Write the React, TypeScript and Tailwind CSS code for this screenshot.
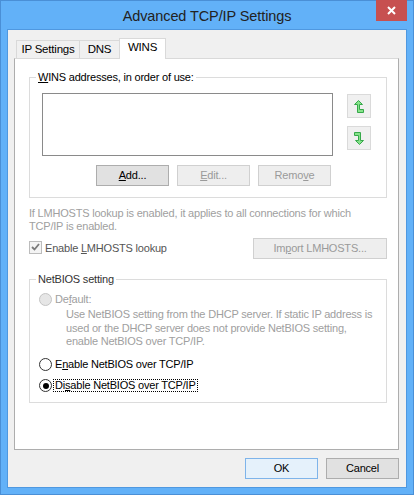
import React from "react";

const font = { fontFamily: '"Liberation Sans", Arial, sans-serif' };

function UpIcon({ flip = false }: { flip?: boolean }) {
  return (
    <svg width="10" height="13" viewBox="0 0 10 13" style={flip ? { transform: "rotate(180deg)" } : undefined}>
      <polygon
        points="4.5,0.5 8.5,4.5 5.5,4.5 5.5,9.5 9.5,9.5 9.5,12.5 3.5,12.5 3.5,4.5 0.5,4.5"
        fill="#86e38a"
        stroke="#36a84a"
        strokeWidth="1"
        strokeLinejoin="miter"
      />
    </svg>
  );
}

function Btn({
  children,
  disabled = false,
  width = "w-[73px]",
  primary = false,
}: {
  children: React.ReactNode;
  disabled?: boolean;
  width?: string;
  primary?: boolean;
}) {
  const cls = disabled
    ? "border-[#d0d0d0] bg-[#eeeeee] text-[#9a9a9a]"
    : primary
    ? "border-[#7eb4ea] bg-[#e5f1fb] text-black"
    : "border-[#adadad] bg-[#e1e1e1] text-black";
  return (
    <div className={`${width} h-[21px] border ${cls} flex items-center justify-center text-[11px] leading-[13px] tracking-[-0.2px]`}>
      {children}
    </div>
  );
}

function Radio({ checked = false, disabled = false }: { checked?: boolean; disabled?: boolean }) {
  return (
    <div
      className={`w-[13px] h-[13px] rounded-full border flex items-center justify-center ${
        disabled ? "border-[#c4c4c4] bg-[#e6e6e6]" : "border-[#333333] bg-white"
      }`}
    >
      {checked && <div className="w-[6px] h-[6px] rounded-full bg-black" />}
    </div>
  );
}

export default function App() {
  return (
    <div className="w-[414px] h-[495px] border border-[#4a8fd6] bg-[#62b1f8] flex flex-col" style={font}>
      {/* Title bar */}
      <div className="relative h-[28px] flex items-center justify-center">
        <span className="text-[14.5px] text-[#222222] leading-[18px] mt-[1px] tracking-[-0.1px]">Advanced TCP/IP Settings</span>
        <div className="absolute right-[6px] top-[-1px] w-[31px] h-[21px] bg-[#c75050] flex items-center justify-center">
          <svg width="9" height="9" viewBox="0 0 9 9">
            <path d="M1 1 L8 8 M8 1 L1 8" stroke="white" strokeWidth="2" />
          </svg>
        </div>
      </div>

      {/* Client area */}
      <div className="mx-[6px] mb-[6px] flex-1 border border-[#4f98e0] bg-[#f0f0f0] flex flex-col tracking-[-0.2px]">
        {/* Tabs */}
        <div className="pt-[8px] pl-[8px] flex items-end h-[28px]">
          <div className="w-[64px] h-[18px] border border-b-0 border-[#d9d9d9] bg-[#f0f0f0] flex items-center justify-center text-[11.5px] text-black">
            IP Settings
          </div>
          <div className="w-[40px] h-[18px] border border-l-0 border-b-0 border-[#d9d9d9] bg-[#f0f0f0] flex items-center justify-center text-[11.5px] text-black">
            DNS
          </div>
          <div className="relative z-10 ml-[-1px] mb-[-1px] w-[47px] h-[21px] border border-b-0 border-[#d9d9d9] bg-white flex items-center justify-center pb-[3px] text-[11.5px] text-black">
            WINS
          </div>
        </div>

        {/* Panel */}
        <div className="ml-[6px] mr-[7px] h-[392px] border border-[#adadad] border-t-[#d9d9d9] bg-white flex flex-col pl-[14px] pr-[11px]">
          {/* WINS addresses group */}
          <div className="relative mt-[18px] h-[121px] border border-[#dcdcdc] pl-[12px] pt-[15px]">
            <div className="absolute left-[6px] top-[-7px] px-[2px] bg-white text-[11px] leading-[13px] text-black">
              <u>W</u>INS addresses, in order of use:
            </div>
            <div className="flex items-start">
              <div className="w-[291px] h-[63px] border border-[#8a8a8a] bg-white" />
              <div className="ml-[14px] mt-[1px] flex flex-col gap-[8px]">
                <div className="w-[24px] h-[24px] border border-[#dadada] bg-[#f0f0f0] flex items-center justify-center">
                  <UpIcon />
                </div>
                <div className="w-[24px] h-[24px] border border-[#dadada] bg-[#f0f0f0] flex items-center justify-center">
                  <UpIcon flip />
                </div>
              </div>
            </div>
            <div className="ml-[54px] mt-[9px] flex gap-[8px]">
              <Btn>
                <span>
                  <u>A</u>dd...
                </span>
              </Btn>
              <Btn disabled>
                <span>
                  <u>E</u>dit...
                </span>
              </Btn>
              <Btn disabled>
                <span>
                  Remo<u>v</u>e
                </span>
              </Btn>
            </div>
          </div>

          {/* Info text */}
          <div className="mt-[9px] text-[11px] leading-[13px] text-[#a0a0a0]">
            If LMHOSTS lookup is enabled, it applies to all connections for which
            <br />
            TCP/IP is enabled.
          </div>

          {/* LMHOSTS row */}
          <div className="mt-[5px] h-[21px] flex items-center">
            <div className="w-[13px] h-[13px] border border-[#bcbcbc] bg-[#f4f4f4] flex items-center justify-center mt-[-3px]">
              <svg width="9" height="8" viewBox="0 0 9 8">
                <path d="M1 4 L3.5 6.5 L8 1" stroke="#7a7a7a" strokeWidth="1.8" fill="none" />
              </svg>
            </div>
            <span className="ml-[3px] text-[11px] leading-[13px] text-[#555555]">
              Enable <u>L</u>MHOSTS lookup
            </span>
            <div className="ml-auto">
              <Btn disabled width="w-[134px]">
                <span>
                  Im<u>p</u>ort LMHOSTS...
                </span>
              </Btn>
            </div>
          </div>

          {/* NetBIOS group */}
          <div className="relative mt-[20px] h-[124px] border border-[#dcdcdc] pl-[9px] pt-[12px]">
            <div className="absolute left-[6px] top-[-7px] px-[2px] bg-white text-[11px] leading-[13px] text-[#333333]">
              NetBIOS setting
            </div>
            <div className="h-[14px] flex items-center">
              <Radio disabled />
              <span className="ml-[3px] text-[11px] leading-[13px] text-[#a0a0a0]">
                De<u>f</u>ault:
              </span>
            </div>
            <div className="mt-[2px] ml-[27px] text-[11px] leading-[13.5px] text-[#a0a0a0]">
              Use NetBIOS setting from the DHCP server. If static IP address is
              <br />
              used or the DHCP server does not provide NetBIOS setting,
              <br />
              enable NetBIOS over TCP/IP.
            </div>
            <div className="mt-[9px] h-[14px] flex items-center">
              <Radio />
              <span className="ml-[3px] text-[11px] leading-[13px] text-black">
                E<u>n</u>able NetBIOS over TCP/IP
              </span>
            </div>
            <div className="mt-[7px] h-[14px] flex items-center">
              <Radio checked />
              <span className="ml-[2px] px-[1px] text-[11px] leading-[11px] text-black outline outline-1 outline-dotted outline-black">
                Di<u>s</u>able NetBIOS over TCP/IP
              </span>
            </div>
          </div>
        </div>

        {/* Bottom buttons */}
        <div className="mt-[8px] pr-[7px] flex justify-end gap-[8px]">
          <Btn primary>OK</Btn>
          <Btn>Cancel</Btn>
        </div>
      </div>
    </div>
  );
}
